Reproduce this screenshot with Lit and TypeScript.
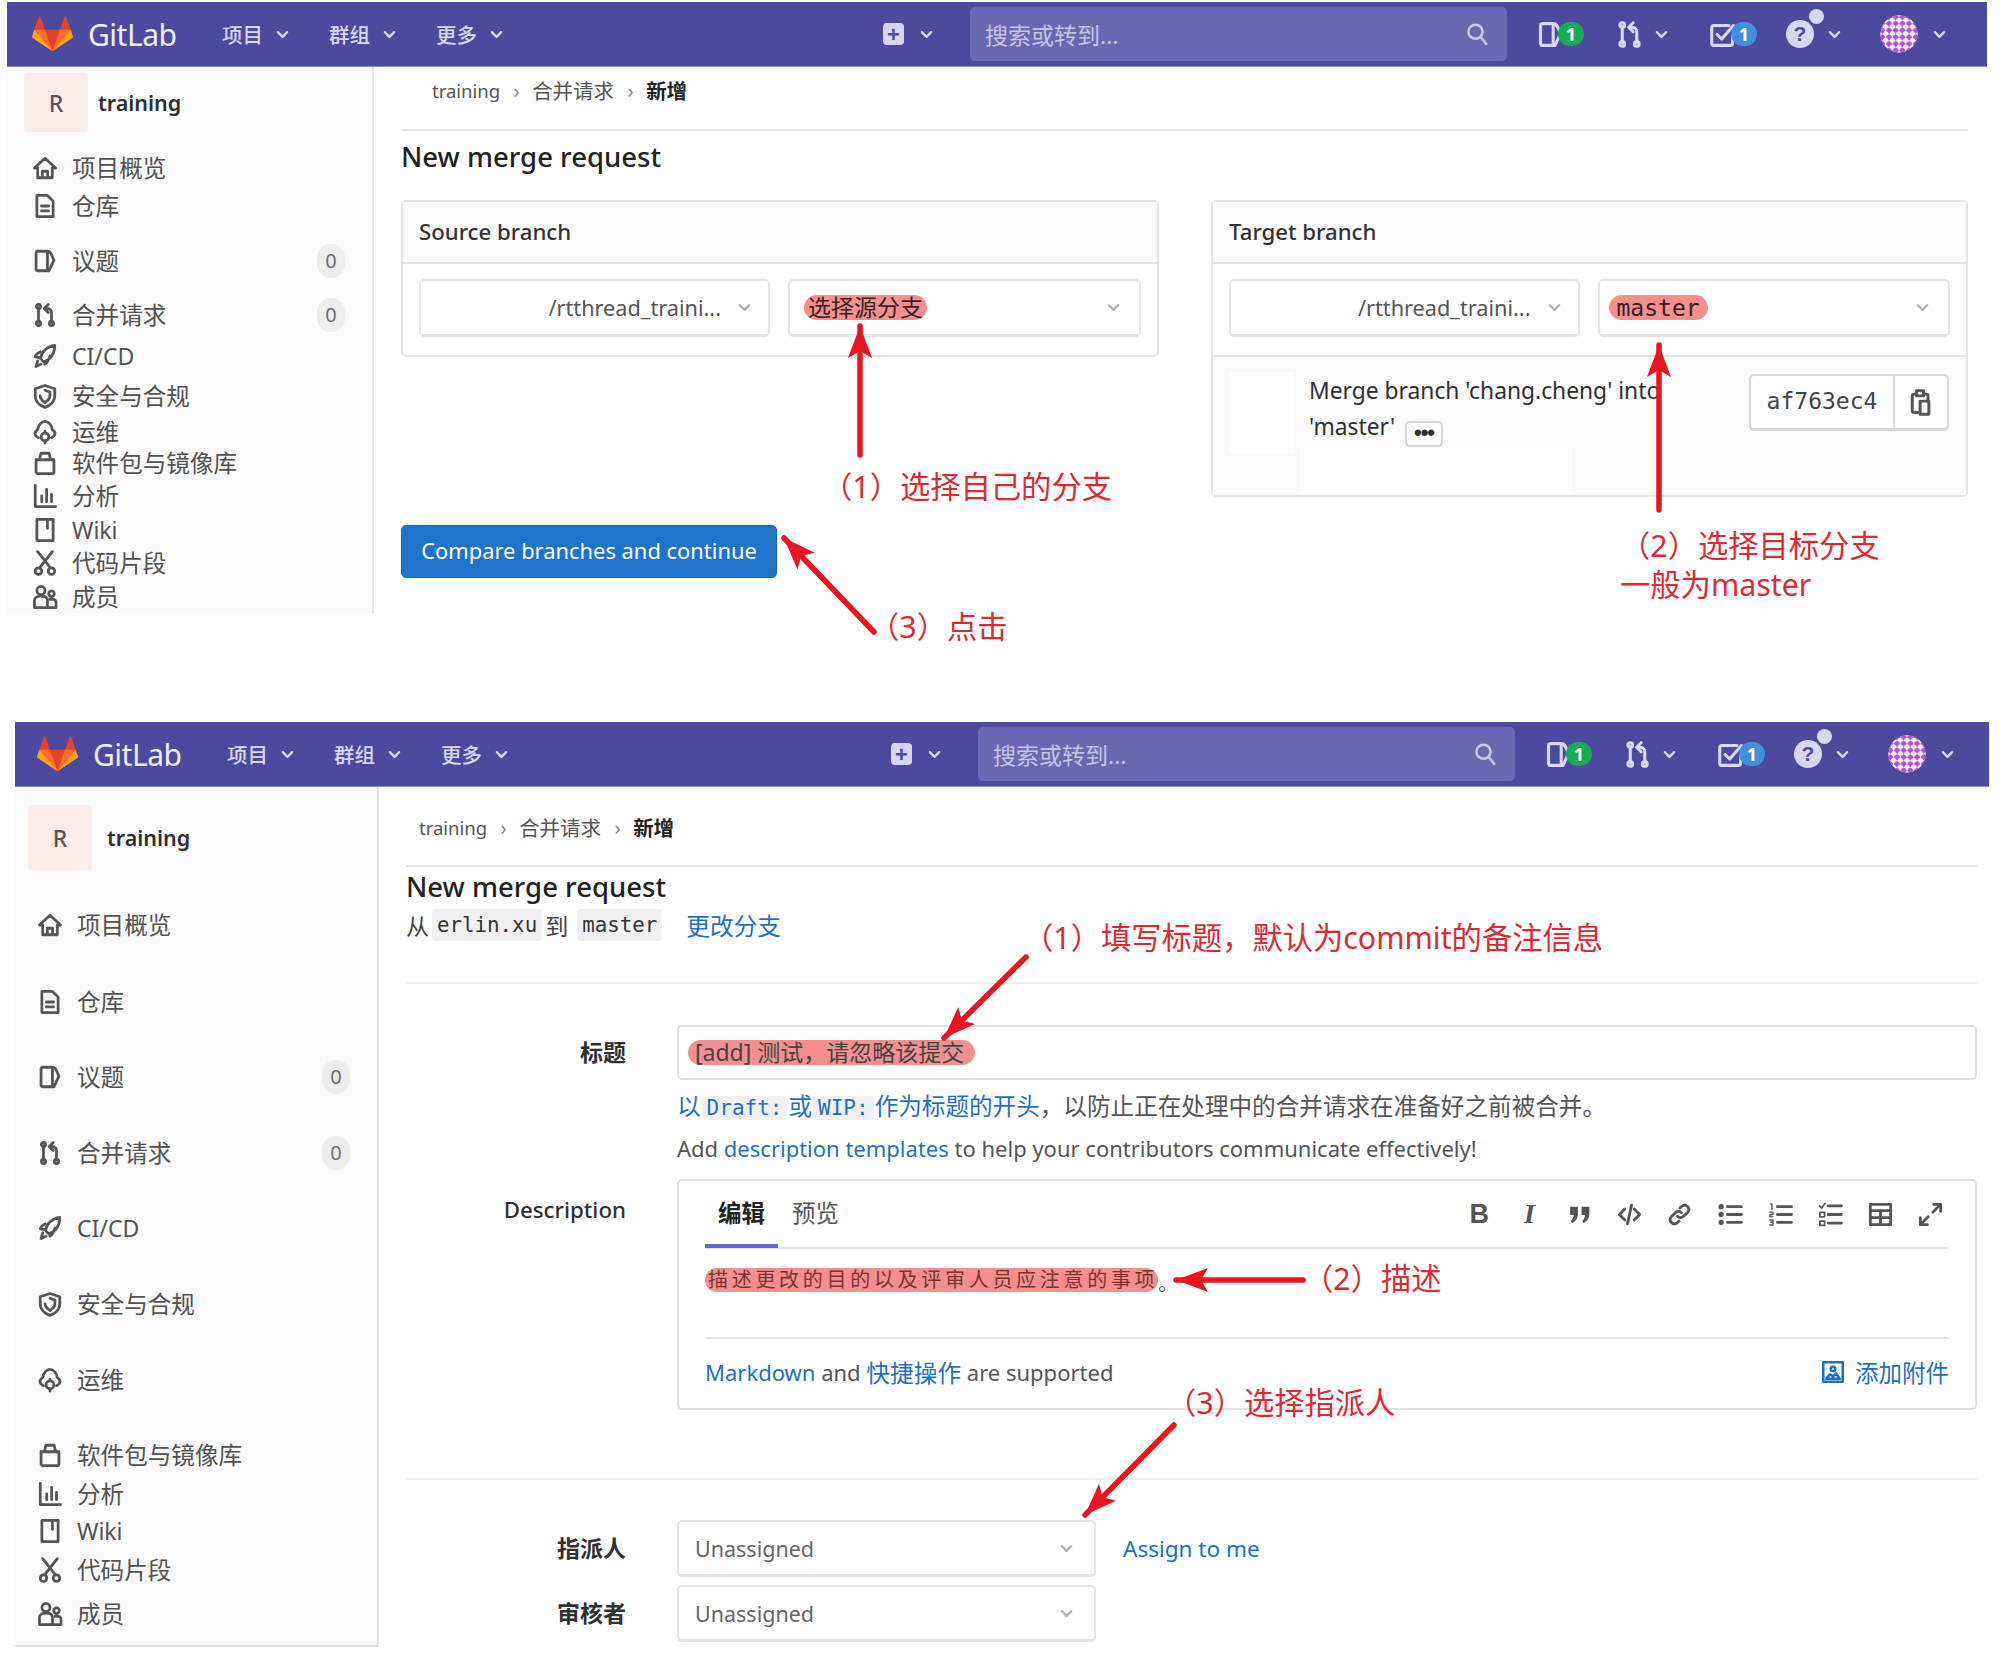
import { LitElement, html, css, svg } from "lit";
import { customElement, property } from "lit/decorators.js";

const chevron = (color = "currentColor") => html`<svg class="chev" viewBox="0 0 16 16" fill="none" stroke=${color} stroke-width="2.4" stroke-linecap="round" stroke-linejoin="round"><path d="M3 5.5 8 10.5 13 5.5"/></svg>`;

const glyphs: Record<string, unknown> = {
  home: svg`<path d="M8 2 14.5 8H12.5V14H3.5V8H1.5Z M6.4 14V10H9.6V14"/>`,
  doc: svg`<path d="M3 1.5H9.5L13 5V14.5H3Z M5.8 8H10.2 M5.8 11H10.2"/>`,
  issue: svg`<path d="M3.5 2H9.5C11 2 11.5 3 12 4L13.5 7.5 10.5 14H3.5C3 14 2.5 13.5 2.5 13V3C2.5 2.5 3 2 3.5 2Z M9.5 2V14"/>`,
  mr: svg`<path d="M4 3.5V12.5 M12 12.5V6.5C12 5 11 4 9.5 4H8 M10 1.5 7.5 4 10 6.5"/><circle cx="4" cy="2.8" r="1.3"/><circle cx="4" cy="13.2" r="1.3"/><circle cx="12" cy="13.2" r="1.3"/>`,
  rocket: svg`<path d="M14 1.5C9.5 2 6 5 5.2 9.5L7 11.5C11.5 10.5 14 6.5 14 1.5Z M5 5.5C3.5 6 2.5 7 2 8.5L4.5 9 M11 8C10.5 10 9.5 12 8 13L7.5 11.5 M3.5 11 2.5 14.5 5.5 13"/>`,
  shield: svg`<path d="M8 1.5 14 3.5V8C14 11.5 11 14 8 15 5 14 2 11.5 2 8V3.5Z M8 4.500 11 5.500V8C11 9.500 9.500 11 8 12 6.500 11 5 9.500 5 8"/>`,
  ops: svg`<path d="M4 11.5C1.5 10.5 1 8 3.5 6.5 4 3.5 6 1.5 8 1.5S12 3.5 12.500 6.500C15 8 14.500 10.500 12 11.500"/><circle cx="8" cy="11" r="2.400"/><path d="M8 7.500V8.500 M8 13.500V14.800"/>`,
  pack: svg`<path d="M2.500 6H13.500V13.500C13.500 14 13 14.500 12.500 14.500H3.500C3 14.500 2.500 14 2.500 13.500Z M4.500 6 5.500 2H10.500L11.500 6"/>`,
  chart: svg`<path d="M2 1.500V14.500H14.500 M6 11.500V8 M9 11.500V4 M12 11.500V7"/>`,
  book: svg`<path d="M3 1.500H13V14.500H3Z M9.500 1.500V7"/>`,
  scissors: svg`<path d="M3.500 1 11 10.500 M12.500 1 5 10.500"/><circle cx="4" cy="13" r="2"/><circle cx="12" cy="13" r="2"/>`,
  users: svg`<circle cx="5.500" cy="4" r="2.500"/><path d="M1.500 14.500V10C1.500 8.500 3 7.500 5.500 7.500S9.500 8.500 9.500 10V14.500Z"/><circle cx="12" cy="6" r="1.700"/><path d="M11 9.500H13C14 9.500 14.800 10.300 14.800 11.300V14.500H9.500"/>`,
  search: svg`<circle cx="7" cy="6.500" r="4.700"/><path d="M10.500 10 14 14.500"/>`,
  todo: svg`<path d="M13 9V13C13 13.500 12.500 14 12 14H2.500C2 14 1.500 13.500 1.500 13V4C1.500 3.500 2 3 2.500 3H11 M4.500 8 7 10.500 13.500 3"/>`,
  quote: svg`<path fill="currentColor" stroke="none" d="M2 3H7V7.500C7 10.200 5.500 12.500 3.200 13.500L2.400 12C3.600 11.200 4.200 9.800 4.300 8.300H2Z M9.300 3H14.300V7.500C14.300 10.200 12.800 12.500 10.500 13.500L9.700 12C10.900 11.200 11.500 9.800 11.600 8.300H9.300Z"/>`,
  code: svg`<path d="M5 4.500 1.500 8 5 11.500 M11 4.500 14.500 8 11 11.500 M9.300 2 6.700 14"/>`,
  link: svg`<path d="M6.800 9.200C8 10.500 9.800 10 10.800 9L13.300 6.500C15.500 4 12 .5 9.500 2.700L8.300 3.900 M9.200 6.800C8 5.500 6.200 6 5.200 7L2.700 9.500C.5 12 4 15.500 6.500 13.300L7.700 12.100"/>`,
  ul: svg`<path d="M6 3H15 M6 8H15 M6 13H15"/><circle cx="2" cy="3" r=".8"/><circle cx="2" cy="8" r=".8"/><circle cx="2" cy="13" r=".8"/>`,
  ol: svg`<path d="M6 3H15 M6 8H15 M6 13H15"/><path stroke-width=".9" d="M1.500 1.200H2.500V4.700 M1.200 6.500H3.200V8H1.200V9.500H3.200 M1.200 11.500H3.200V14.700H1.200 M1.800 13H3.200"/>`,
  task: svg`<path d="M6.500 2.500H15 M6.500 8H15 M6.500 13.500H15"/><path stroke-width="1.100" d="M1 2.500 2.300 4 4.500 1 M1.200 6.700H4.200V9.500H1.200Z M1.200 12.200H4.200V15H1.200Z"/>`,
  table: svg`<path d="M1.500 1.500H14.500V14.500H1.500Z M1.500 5.500H14.500 M1.500 10H14.500 M8 5.500V14.500"/>`,
  expand: svg`<path d="M9.500 6.500 14 2 M10 1.500H14.500V6 M6.500 9.500 2 14 M1.500 10V14.500H6"/>`,
  image: svg`<path d="M1.500 1.500H14.500V14.500H1.500Z M3.500 12.500 6 9.500 8 11 10 9 12.500 12.500Z"/><circle cx="8" cy="6" r="1.500"/>`,
  clip: svg`<path d="M5 3.500H4C3.500 3.500 3 4 3 4.500V13C3 13.500 3.500 14 4 14H6 M10 3.500H11C11.500 3.500 12 4 12 4.500V7 M5.500 1.500H9.500V4.500H5.500Z M7.500 7.500H12.500V15H7.500Z"/>`,
};

const icon = (name: string) => html`<svg class="ic" viewBox="0 0 16 16" fill="none" stroke="currentColor" stroke-width="1.700" stroke-linecap="round" stroke-linejoin="round">${glyphs[name]}</svg>`;

const tanuki = html`<svg class="logo" viewBox="0 0 36 36" preserveAspectRatio="none">
  <path fill="#e24329" d="M2 14l9.38 9v-9l-4-12.28c-.205-.632-1.176-.632-1.38 0z"/>
  <path fill="#e24329" d="M34 14l-9.38 9v-9l4-12.28c.205-.632 1.176-.632 1.38 0z"/>
  <path fill="#e24329" d="M18,34.38 3,14 33,14 Z"/>
  <path fill="#fc6d26" d="M18,34.38 11.38,14 2,14 6,25Z"/>
  <path fill="#fc6d26" d="M18,34.38 24.62,14 34,14 30,25Z"/>
  <path fill="#fca326" d="M2 14L.1 20.16c-.18.565 0 1.2.5 1.56l17.42 12.66z"/>
  <path fill="#fca326" d="M34 14l1.9 6.16c.18.565 0 1.2-.5 1.56L18 34.38z"/>
</svg>`;

const spots = Array.from({ length: 121 }, (_, n) => ({ x: n % 11 - 1, y: Math.floor(n / 11) - 1 }));
const globe = (id: string) => html`<svg class="globe" viewBox="0 0 40 40">
  <defs><clipPath id=${id}><circle cx="20" cy="20" r="19.500"/></clipPath></defs>
  <g clip-path="url(#${id})">
    <rect width="40" height="40" fill="#dcb6ea"/>
    <g transform="rotate(45 20 20)">
      ${spots.map((s) => svg`<circle cx=${s.x * 5} cy=${s.y * 5} r="2.900" fill=${(s.x + s.y) % 2 ? "#b452d6" : "#f7eefb"}/>`)}
    </g>
  </g>
</svg>`;

let navCount = 0;

@customElement("gl-navbar")
export class GlNavbar extends LitElement {
  static styles = css`
    :host {
      display: flex;
      align-items: center;
      height: 65px;
      padding: 0 41px 0 25px;
      background: #4c4a9f;
      border-bottom: 1px solid #8b8ac8;
      box-sizing: border-box;
      color: #d8d7f0;
    }
    :host([second]) { padding: 0 35px 0 22px; }
    .logo { width: 41px; height: 38px; flex: none; }
    .brand { font-size: 30px; color: #eeeef8; margin: 0 46px 0 15px; width: 88px; letter-spacing: -.5px; white-space: nowrap; }
    .menu { display: flex; width: 107px; align-items: center; font-size: 20.500px; font-weight: 500; flex: none; }
    .menu .chev { margin-left: 12px; }
    .chev { width: 15px; height: 15px; flex: none; }
    .spacer { flex: 1; }
    .plus { width: 87px; display: flex; align-items: center; flex: none; }
    .plus-box { width: 21px; height: 22px; border-radius: 4px; background: #d8d7f0; color: #4c4a9f; display: flex; align-items: center; justify-content: center; font: 700 22px/21px "Liberation Sans", sans-serif; margin-right: 15px; }
    .search { width: 537px; height: 54px; box-sizing: border-box; flex: none; margin-right: 32px; padding: 0 18px 0 15px; background: #6a68b2; border-radius: 5px; display: flex; align-items: center; justify-content: space-between; font-size: 23px; color: #c4c3e4; }
    .search .ic { width: 24px; height: 24px; margin: 0; color: #c8c7e6; }
    .cell { display: flex; align-items: center; flex: none; position: relative; }
    .c-issue { width: 79px; }
    .c-mr { width: 94px; }
    .c-todo { width: 74px; }
    .c-help { width: 94px; }
    .c-user { width: 66px; }
    .ic { width: 29px; height: 29px; flex: none; margin-left: -3px; }
    .c-mr .chev { margin-left: 10px; }
    .pill { height: 24px; width: 26px; border-radius: 12px; color: #fff; font: 700 18px/24px "Noto Sans", sans-serif; text-align: center; margin-left: -7px; }
    .green { background: #1aaa55; }
    .blue { background: #428fdc; }
    .help { width: 28px; height: 28px; border-radius: 50%; background: #d8d7f0; color: #4c4a9f; font: 700 21px/28px "Liberation Sans", sans-serif; text-align: center; }
    .dot { position: absolute; left: 23px; top: -11px; width: 15px; height: 15px; border-radius: 50%; background: #d8d7f0; }
    .c-help .chev { margin-left: 13px; }
    .globe { width: 38px; height: 38px; flex: none; filter: blur(.5px); }
    .c-user .chev { margin-left: 14px; }
  `;

  private uid = `globe${navCount++}`;

  render() {
    return html`
      ${tanuki}
      <span class="brand">GitLab</span>
      ${["项目", "群组", "更多"].map((m) => html`<span class="menu">${m}${chevron()}</span>`)}
      <span class="spacer"></span>
      <span class="plus"><span class="plus-box">+</span>${chevron()}</span>
      <div class="search"><span>搜索或转到...</span>${icon("search")}</div>
      <span class="cell c-issue">${icon("issue")}<span class="pill green">1</span></span>
      <span class="cell c-mr">${icon("mr")}${chevron()}</span>
      <span class="cell c-todo">${icon("todo")}<span class="pill blue">1</span></span>
      <span class="cell c-help"><span class="help">?</span><span class="dot"></span>${chevron()}</span>
      <span class="cell c-user">${globe(this.uid)}${chevron()}</span>
    `;
  }
}

type NavRow = { icon: string; label: string; y: number; count?: string };

const rowLabels: [string, string, string?][] = [
  ["home", "项目概览"], ["doc", "仓库"], ["issue", "议题", "0"], ["mr", "合并请求", "0"],
  ["rocket", "CI/CD"], ["shield", "安全与合规"], ["ops", "运维"], ["pack", "软件包与镜像库"],
  ["chart", "分析"], ["book", "Wiki"], ["scissors", "代码片段"], ["users", "成员"],
];
const makeRows = (ys: number[]): NavRow[] => rowLabels.map(([i, label, count], n) => ({ icon: i, label, count, y: ys[n] }));

@customElement("gl-sidebar")
export class GlSidebar extends LitElement {
  @property({ attribute: false }) rows: NavRow[] = [];
  @property({ type: Number }) top = 0;

  static styles = css`
    :host {
      display: block;
      box-sizing: border-box;
      background: #fafafa;
      border-right: 2px solid #e6e6e6;
      overflow: hidden;
      height: 546px;
    }
    :host([second]) { height: 860px; border-bottom: 2px solid #e0e0e0; }
    .head { display: flex; align-items: center; height: 59px; margin: 6px 0 0 17px; font-size: 21.500px; font-weight: 600; color: #303030; }
    :host([second]) .head { height: 65px; margin: 18px 0 0 13px; }
    .tile { width: 64px; height: 100%; background: #fbeceb; border-radius: 4px; display: flex; align-items: center; justify-content: center; font-size: 23px; font-weight: 500; color: #555; margin-right: 10px; }
    :host([second]) .tile { margin-right: 15px; }
    .row { display: flex; align-items: center; height: 28px; line-height: 28px; padding: 0 27px 0 25px; font-size: 23.600px; color: #525252; white-space: nowrap; }
    .row.latin { font-size: 23px; }
    :host([second]) .row { padding: 0 27px 0 22px; }
    .ic { width: 26px; height: 26px; flex: none; margin-right: 14px; color: #555; }
    .count { margin-left: auto; width: 28px; height: 34px; border-radius: 14px; background: #ececec; color: #707070; font-size: 20px; line-height: 34px; text-align: center; flex: none; }
  `;

  render() {
    // spacing between rows is uneven in the shot, so it is worked out from the row centres
    return html`
      <div class="head"><span class="tile">R</span>training</div>
      ${this.rows.map((r, i) => {
        const prev = i === 0 ? this.top : this.rows[i - 1].y + 14;
        const latin = /^[\x00-\x7f]+$/.test(r.label);
        return html`<div class="row ${latin ? "latin" : ""}" style="margin-top:${r.y - 14 - prev}px">${icon(r.icon)}${r.label}${r.count ? html`<span class="count">${r.count}</span>` : ""}</div>`;
      })}
    `;
  }
}

const arrow = (x1: number, y1: number, x2: number, y2: number) => {
  const a = (Math.atan2(y2 - y1, x2 - x1) * 180) / Math.PI;
  return svg`
    <line x1=${x1} y1=${y1} x2=${x2} y2=${y2} stroke="#e8141f" stroke-width="5.500" stroke-linecap="round"/>
    <path d="M0 0 -32 -12 -25 0 -32 12Z" fill="#e8141f" transform="translate(${x2} ${y2}) rotate(${a})"/>`;
};

@customElement("app-root")
export class AppRoot extends LitElement {
  static styles = css`
    :host {
      display: block;
      position: relative;
      width: 2008px;
      height: 1660px;
      overflow: hidden;
      background: #fff;
      color: #2e2e2e;
      font-family: "Noto Sans", "Noto Sans CJK SC", sans-serif;
      font-size: 22px;
    }
    code { font-family: "DejaVu Sans Mono", monospace; }
    .shot { display: grid; box-sizing: border-box; align-items: start; }
    .one { margin: 2px 21px 0 7px; height: 720px; grid-template-columns: 367px 1fr; grid-template-rows: 65px auto; }
    .two { margin: 0 19px 0 15px; height: 925px; grid-template-columns: 364px 1fr; grid-template-rows: 65px auto; }
    gl-navbar { grid-column: 1 / 3; }
    .main { padding: 0 19px 0 27px; min-width: 0; }
    .two .main { padding: 0 12px 0 27px; }
    .crumbs { display: flex; align-items: center; height: 64px; padding: 0 0 16px 31px; box-sizing: border-box; border-bottom: 2px solid #e5e5e5; font-size: 20.500px; color: #555; }
    .two .crumbs { height: 80px; padding: 2px 0 0 13px; border-bottom-width: 2px; }
    .crumbs .latin { font-size: 18.500px; }
    .sep { width: 9px; margin: 0 11px 0 12px; color: #888; font-size: 20px; text-align: center; }
    .crumbs b { color: #222; font-weight: 700; }
    h1 { margin: 0; font-size: 27.500px; font-weight: 500; color: #222; line-height: 52px; height: 69px; }
    .two h1 { line-height: 40px; height: 40px; }
    .panes { display: grid; grid-template-columns: 758px 757px; gap: 52px; align-items: start; }
    .card { border: 2px solid #e5e5e5; border-radius: 5px; box-sizing: border-box; }
    .card-head { height: 60px; line-height: 60px; padding: 0 16px; background: #fafafa; border-bottom: 2px solid #e5e5e5; font-weight: 500; font-size: 22.200px; color: #333; }
    .selects { display: flex; gap: 18px; padding: 15px 16px 18px; }
    .select { flex: 1; height: 58px; box-sizing: border-box; min-width: 0; border: 2px solid #e5e5e5; border-bottom-width: 3px; border-radius: 5px; background: #fff; display: flex; align-items: center; padding: 0 18px 0 12px; color: #555; font-size: 21.700px; white-space: nowrap; }
    .select .chev { width: 15px; height: 15px; flex: none; margin-left: auto; color: #b0b0b0; }
    .select.path { justify-content: flex-end; padding-right: 16px; }
    .select.path .chev { margin-left: 16px; }
    .hl { background: #f58f8f; border-radius: 13px; color: #3a2020; line-height: 25px; height: 25px; padding: 0 4px; }
    .cjk { font-size: 23px; }
    .select .hl { margin-left: 2px; }
    .select .hl.mono { padding: 0 8px; margin-left: -3px; }
    .hl code { font-size: 23px; }
    .commit { display: flex; gap: 15px; padding: 15px 17px 6px 17px; border-top: 2px solid #e5e5e5; background: #fafafa; height: 140px; box-sizing: border-box; }
    .blank { background: #fff; }
    .commit-pic { width: 64px; height: 81px; flex: none; }
    .commit-body { flex: 1; min-width: 0; font-size: 22.800px; color: #303030; line-height: 36px; padding-top: 1px; white-space: nowrap; }
    .dots { display: inline-block; width: 38px; height: 26px; box-sizing: border-box; margin-left: 10px; border: 2px solid #d8d8d8; border-radius: 5px; background: #fff; font: 900 22px/20px "Liberation Sans", sans-serif; text-align: center; vertical-align: -5px; letter-spacing: -1px; }
    .commit-note { width: 272px; height: 45px; margin: 1px 0 0 -9px; }
    .sha { display: flex; flex: none; width: 200px; height: 57px; margin-top: 2px; box-sizing: border-box; border: 2px solid #d8d8d8; border-bottom-width: 3px; border-radius: 5px; background: #fff; }
    .sha code { flex: 1; text-align: center; line-height: 50px; font-size: 23px; color: #444; border-right: 2px solid #dcdcdc; }
    .sha-btn { width: 52px; display: flex; align-items: center; justify-content: center; color: #555; }
    .ic { width: 28px; height: 28px; flex: none; }
    .btn { display: inline-block; margin-top: 28px; width: 376px; height: 53px; box-sizing: border-box; background: #1f73cb; border: 1px solid #1a66b8; border-radius: 5px; color: #fff; text-align: center; line-height: 50px; font-size: 21.900px; white-space: nowrap; }
    .sub { display: flex; align-items: center; height: 36px; font-size: 23px; color: #444; }
    .tag { background: #f0f0f0; border-radius: 4px; font-size: 20.800px; padding: 0 5px; line-height: 32px; color: #333; }
    .sub .tag { margin: 0 3px; }
    .sub .tag + span + .tag { margin-left: 9px; }
    a { color: #1f6fc4; text-decoration: none; }
    .sub a { margin-left: 21px; font-size: 23.700px; }
    .rule { height: 2px; background: #f0f0f0; }
    .rule.a { margin: 39px 0 41px; }
    .rule.b { margin: 68px 0 40px; }
    .form { display: grid; grid-template-columns: 220px 1300px; column-gap: 51px; }
    .label { text-align: right; font-weight: 600; color: #303030; font-size: 23px; }
    .label.input-l { line-height: 55px; }
    .input { height: 55px; box-sizing: border-box; border: 2px solid #e2e2e2; border-radius: 5px; display: flex; align-items: center; padding-left: 9px; }
    .input .hl { padding: 0 11px 0 7px; font-size: 23px; color: #444; }
    .hint { font-size: 23.600px; color: #555; height: 39px; padding-top: 6px; line-height: 40px; white-space: nowrap; }
    .hint .tag { background: #f0f0f0; color: inherit; margin: 0 1px; padding: 0 5px; font-size: 21px; }
    .hint-en { font-size: 22px; height: 32px; line-height: 32px; margin: 7px 0 15px; padding-top: 0; }
    .desc-label { font-weight: 500; line-height: 60px; margin-top: 1px; font-size: 22.300px; }
    .editor { height: 231px; box-sizing: border-box; border: 2px solid #e2e2e2; border-radius: 5px; padding: 0 26px; }
    .tabs { display: flex; height: 66px; border-bottom: 2px solid #e5e5e5; box-sizing: content-box; }
    .tab { height: 64px; line-height: 64px; font-size: 23.500px; color: #555; padding: 0 14px; }
    .tab.on { width: 73px; box-sizing: border-box; height: 67px; padding: 0; text-align: center; font-weight: 700; color: #222; border-bottom: 4px solid #6666c4; }
    .tools { margin: 0 -7px 0 auto; display: flex; align-items: center; height: 66px; color: #555; }
    .tool { width: 50.200px; display: flex; justify-content: center; align-items: center; }
    .tool .ic { width: 25px; height: 25px; stroke-width: 1.800; }
    .tool-b { font: 700 27px/1 "Liberation Sans", sans-serif; }
    .tool-i { font: italic 700 28px/1 "Liberation Serif", serif; }
    .body { height: 90px; box-sizing: border-box; padding-top: 19px; border-bottom: 2px solid #e5e5e5; display: flex; align-items: flex-start; color: #666; font-size: 20px; }
    .body .hl { letter-spacing: 3.700px; padding: 0 0 0 3px; font-size: 20px; height: 24px; line-height: 24px; color: #7a3434; }
    .foot { display: flex; align-items: center; height: 67px; padding-bottom: 1px; box-sizing: border-box; color: #555; font-size: 22px; white-space: nowrap; }
    .foot .cn { font-size: 23.700px; }
    .foot .attach { margin-left: auto; display: flex; align-items: center; gap: 10px; font-size: 23.500px; }
    .attach .ic { width: 24px; height: 24px; }
    .people { grid-template-columns: 220px 419px auto; row-gap: 8px; }
    .people .select { height: 57px; padding: 0 20px 0 16px; color: #666; font-size: 21.500px; }
    .people .label { line-height: 57px; }
    .people a { line-height: 57px; margin-left: -24px; font-size: 22.500px; }
    .canvas { position: absolute; inset: 0; width: 2008px; height: 1660px; pointer-events: none; }
    .note { position: absolute; color: #dc2a33; font-size: 30.300px; line-height: 40px; white-space: nowrap; pointer-events: none; }
    .n1 { left: 822px; top: 467px; }
    .n2 { left: 1620px; top: 526px; }
    .n2b { left: 1620px; top: 565px; }
    .n3 { left: 869px; top: 607px; }
    .n4 { left: 1023px; top: 918px; }
    .n5 { left: 1303px; top: 1259px; }
    .n6 { left: 1166px; top: 1383px; }
  `;

  render() {
    return html`
      <section class="shot one">
        <gl-navbar></gl-navbar>
        <gl-sidebar .top=${65} .rows=${makeRows([168, 206, 261, 315, 356, 396, 432, 463, 496, 530, 563, 597].map((y) => y - 67))}></gl-sidebar>
        <div class="main">
          <div class="crumbs"><span class="latin">training</span><span class="sep">›</span><span>合并请求</span><span class="sep">›</span><b>新增</b></div>
          <h1>New merge request</h1>
          <div class="panes">
            <div class="card">
              <div class="card-head">Source branch</div>
              <div class="selects">
                <div class="select path">/rtthread_traini...${chevron()}</div>
                <div class="select"><span class="hl cjk">选择源分支</span>${chevron()}</div>
              </div>
            </div>
            <div class="card">
              <div class="card-head">Target branch</div>
              <div class="selects">
                <div class="select path">/rtthread_traini...${chevron()}</div>
                <div class="select"><span class="hl mono"><code>master</code></span>${chevron()}</div>
              </div>
              <div class="commit">
                <div class="commit-pic blank"></div>
                <div class="commit-body">
                  Merge branch 'chang.cheng' into<br />'master'<span class="dots">•••</span>
                  <div class="commit-note blank"></div>
                </div>
                <div class="sha"><code>af763ec4</code><span class="sha-btn">${icon("clip")}</span></div>
              </div>
            </div>
          </div>
          <div class="btn">Compare branches and continue</div>
        </div>
      </section>

      <section class="shot two">
        <gl-navbar second></gl-navbar>
        <gl-sidebar second .top=${84} .rows=${makeRows([926, 1003, 1078, 1154, 1229, 1305, 1381, 1456, 1495, 1532, 1571, 1615].map((y) => y - 787))}></gl-sidebar>
        <div class="main">
          <div class="crumbs"><span class="latin">training</span><span class="sep">›</span><span>合并请求</span><span class="sep">›</span><b>新增</b></div>
          <h1>New merge request</h1>
          <div class="sub"><span>从</span><code class="tag">erlin.xu</code><span>到</span><code class="tag">master</code><a>更改分支</a></div>
          <div class="rule a"></div>
          <div class="form">
            <div class="label input-l">标题</div>
            <div>
              <div class="input"><span class="hl">[add] 测试，请忽略该提交</span></div>
              <div class="hint"><a>以<code class="tag">Draft:</code>或<code class="tag">WIP:</code>作为标题的开头</a>，以防止正在处理中的合并请求在准备好之前被合并。</div>
              <div class="hint hint-en">Add <a>description templates</a> to help your contributors communicate effectively!</div>
            </div>
            <div class="label desc-label">Description</div>
            <div class="editor">
              <div class="tabs">
                <div class="tab on">编辑</div>
                <div class="tab">预览</div>
                <div class="tools">
                  <span class="tool tool-b">B</span>
                  <span class="tool tool-i">I</span>
                  ${["quote", "code", "link", "ul", "ol", "task", "table", "expand"].map((t) => html`<span class="tool">${icon(t)}</span>`)}
                </div>
              </div>
              <div class="body"><span class="hl">描述更改的目的以及评审人员应注意的事项</span><span>。</span></div>
              <div class="foot"><a>Markdown</a>&nbsp;and&nbsp;<a class="cn">快捷操作</a>&nbsp;are supported<a class="attach">${icon("image")}添加附件</a></div>
            </div>
          </div>
          <div class="rule b"></div>
          <div class="form people">
            <div class="label">指派人</div>
            <div class="select">Unassigned${chevron()}</div>
            <a>Assign to me</a>
            <div class="label">审核者</div>
            <div class="select">Unassigned${chevron()}</div>
          </div>
        </div>
      </section>

      <svg class="canvas" viewBox="0 0 2008 1660">
        ${arrow(860, 455, 860, 326)}
        ${arrow(1659, 510, 1659, 345)}
        ${arrow(874, 632, 784, 538)}
        ${arrow(1026, 957, 944, 1038)}
        ${arrow(1303, 1280, 1176, 1280)}
        ${arrow(1174, 1425, 1085, 1515)}
      </svg>
      <div class="note n1">（1）选择自己的分支</div>
      <div class="note n2">（2）选择目标分支</div>
      <div class="note n2b">一般为master</div>
      <div class="note n3">（3）点击</div>
      <div class="note n4">（1）填写标题，默认为commit的备注信息</div>
      <div class="note n5">（2）描述</div>
      <div class="note n6">（3）选择指派人</div>
    `;
  }
}
